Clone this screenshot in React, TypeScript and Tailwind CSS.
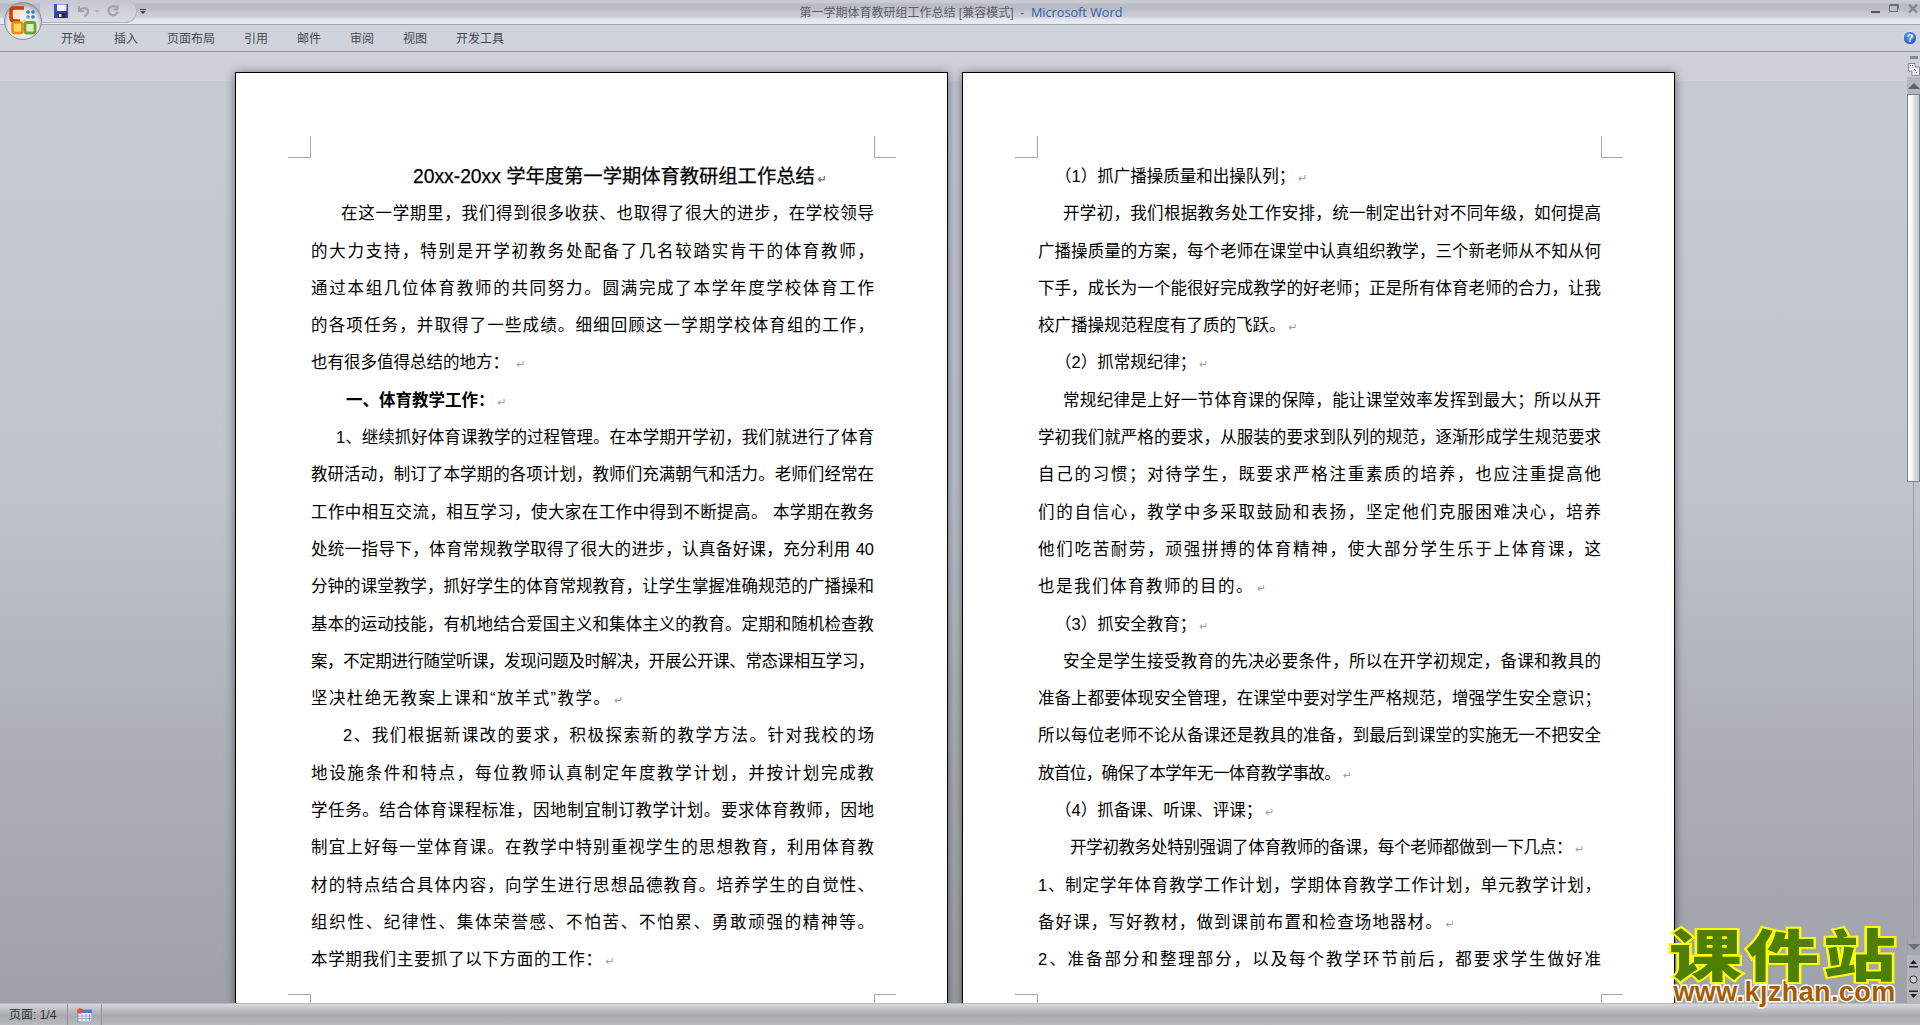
import React from 'react';

type L = { t: string; c?: string; end?: boolean };

const page1: L[] = [
  { t: '在这一学期里，我们得到很多收获、也取得了很大的进步，在学校领导', c: 'indent-[30px]' },
  { t: '的大力支持，特别是开学初教务处配备了几名较踏实肯干的体育教师，' },
  { t: '通过本组几位体育教师的共同努力。圆满完成了本学年度学校体育工作' },
  { t: '的各项任务，并取得了一些成绩。细细回顾这一学期学校体育组的工作，' },
  { t: '也有很多值得总结的地方： ', end: true },
  { t: '一、体育教学工作：', c: 'indent-[35px] font-bold', end: true },
  { t: '1、继续抓好体育课教学的过程管理。在本学期开学初，我们就进行了体育', c: 'indent-[25px]' },
  { t: '教研活动，制订了本学期的各项计划，教师们充满朝气和活力。老师们经常在' },
  { t: '工作中相互交流，相互学习，使大家在工作中得到不断提高。 本学期在教务' },
  { t: '处统一指导下，体育常规教学取得了很大的进步，认真备好课，充分利用 40' },
  { t: '分钟的课堂教学，抓好学生的体育常规教育，让学生掌握准确规范的广播操和' },
  { t: '基本的运动技能，有机地结合爱国主义和集体主义的教育。定期和随机检查教' },
  { t: '案，不定期进行随堂听课，发现问题及时解决，开展公开课、常态课相互学习，', c: 'tracking-[-0.5px]' },
  { t: '坚决杜绝无教案上课和“放羊式”教学。', c: 'tracking-[1.4px]', end: true },
  { t: '2、我们根据新课改的要求，积极探索新的教学方法。针对我校的场', c: 'indent-[32px]' },
  { t: '地设施条件和特点，每位教师认真制定年度教学计划，并按计划完成教' },
  { t: '学任务。结合体育课程标准，因地制宜制订教学计划。要求体育教师，因地' },
  { t: '制宜上好每一堂体育课。在教学中特别重视学生的思想教育，利用体育教' },
  { t: '材的特点结合具体内容，向学生进行思想品德教育。培养学生的自觉性、' },
  { t: '组织性、纪律性、集体荣誉感、不怕苦、不怕累、勇敢顽强的精神等。' },
  { t: '本学期我们主要抓了以下方面的工作：', c: 'tracking-[0.65px]', end: true },
];

const page2: L[] = [
  { t: '（1）抓广播操质量和出操队列；', c: 'indent-[17px]', end: true },
  { t: '开学初，我们根据教务处工作安排，统一制定出针对不同年级，如何提高', c: 'indent-[25px]' },
  { t: '广播操质量的方案，每个老师在课堂中认真组织教学，三个新老师从不知从何' },
  { t: '下手，成长为一个能很好完成教学的好老师；正是所有体育老师的合力，让我' },
  { t: '校广播操规范程度有了质的飞跃。', end: true },
  { t: '（2）抓常规纪律；', c: 'indent-[17px]', end: true },
  { t: '常规纪律是上好一节体育课的保障，能让课堂效率发挥到最大；所以从开', c: 'indent-[25px]' },
  { t: '学初我们就严格的要求，从服装的要求到队列的规范，逐渐形成学生规范要求' },
  { t: '自己的习惯；对待学生，既要求严格注重素质的培养，也应注重提高他' },
  { t: '们的自信心，教学中多采取鼓励和表扬，坚定他们克服困难决心，培养' },
  { t: '他们吃苦耐劳，顽强拼搏的体育精神，使大部分学生乐于上体育课，这' },
  { t: '也是我们体育教师的目的。', c: 'tracking-[1.5px]', end: true },
  { t: '（3）抓安全教育；', c: 'indent-[17px]', end: true },
  { t: '安全是学生接受教育的先决必要条件，所以在开学初规定，备课和教具的', c: 'indent-[25px]' },
  { t: '准备上都要体现安全管理，在课堂中要对学生严格规范，增强学生安全意识；' },
  { t: '所以每位老师不论从备课还是教具的准备，到最后到课堂的实施无一不把安全' },
  { t: '放首位，确保了本学年无一体育教学事故。', c: 'tracking-[-0.6px]', end: true },
  { t: '（4）抓备课、听课、评课；', c: 'indent-[17px]', end: true },
  { t: '开学初教务处特别强调了体育教师的备课，每个老师都做到一下几点：', c: 'indent-[32px] tracking-[-0.3px]', end: true },
  { t: '1、制定学年体育教学工作计划，学期体育教学工作计划，单元教学计划，' },
  { t: '备好课，写好教材，做到课前布置和检查场地器材。', c: 'tracking-[1.1px]', end: true },
  { t: '2、准备部分和整理部分，以及每个教学环节前后，都要求学生做好准' },
];

function Mark() {
  return <span className="ml-[3px] font-['DejaVu_Sans',sans-serif] text-[11px] font-normal tracking-normal text-[#a0a0a0]">↵</span>;
}

function Line({ l }: { l: L }) {
  return (
    <p className={`h-[37.3px] ${l.end ? 'text-left' : 'text-justify [text-align-last:justify]'} ${l.c ?? ''}`}>
      {l.t}
      {l.end ? <Mark /> : null}
    </p>
  );
}

function CropMarks() {
  return (
    <>
      <div className="absolute left-[52px] top-[63px] h-[22px] w-[23px] border-b border-r border-[#a8a8a8]" />
      <div className="absolute left-[638px] top-[63px] h-[22px] w-[22px] border-b border-l border-[#a8a8a8]" />
      <div className="absolute left-[52px] top-[921px] h-[22px] w-[23px] border-r border-t border-[#a8a8a8]" />
      <div className="absolute left-[638px] top-[921px] h-[22px] w-[22px] border-l border-t border-[#a8a8a8]" />
    </>
  );
}

function Page({ children }: { children: React.ReactNode }) {
  return (
    <div className="relative h-[960px] w-[713px] shrink-0 border border-black bg-white pl-[75px] pr-[73px] pt-[85px] text-[16.5px] leading-[37.3px] text-black shadow-[0_1px_9px_rgba(0,0,0,0.5)]">
      <CropMarks />
      {children}
    </div>
  );
}

function OfficeButton() {
  return (
    <svg className="absolute left-[4px] top-[2px] h-[38px] w-[38px]" viewBox="0 0 38 38">
      <defs>
        <radialGradient id="orb" cx="50%" cy="60%" r="55%">
          <stop offset="0" stopColor="#ffffff" />
          <stop offset="0.75" stopColor="#e4e4e4" />
          <stop offset="1" stopColor="#a9aab0" />
        </radialGradient>
      </defs>
      <circle cx="19" cy="19" r="18.5" fill="url(#orb)" stroke="#8d8f96" strokeWidth="1" />
      <path d="M20 6 H10 Q7 6 7 9 V16 Q7 19 10 19 H16" fill="none" stroke="#cc3a05" strokeWidth="3.4" />
      <rect x="9.5" y="8.5" width="7" height="8" fill="#f9e8c8" />
      <rect x="8.5" y="20.5" width="10" height="10.5" rx="2" fill="#fdd85a" stroke="#ed8c12" strokeWidth="2.6" />
      <rect x="21" y="20.5" width="10" height="10.5" rx="2" fill="#e2f1c4" stroke="#68a52e" strokeWidth="2.8" />
      <circle cx="24" cy="10" r="1.8" fill="#2c7ac9" />
      <circle cx="29" cy="10" r="1.8" fill="#2c7ac9" />
      <circle cx="24" cy="15" r="1.8" fill="#5a9ae0" />
      <circle cx="29" cy="15" r="1.8" fill="#2c7ac9" />
      <circle cx="20" cy="18.5" r="1.2" fill="#f2b64a" />
    </svg>
  );
}

function Save() {
  return (
    <svg width="14" height="14" viewBox="0 0 14 14">
      <defs>
        <linearGradient id="fl" x1="0" y1="0" x2="1" y2="1">
          <stop offset="0" stopColor="#4057c8" />
          <stop offset="1" stopColor="#2a2f88" />
        </linearGradient>
      </defs>
      <rect width="14" height="14" fill="url(#fl)" />
      <rect x="3" y="0.5" width="9.5" height="6.5" fill="#f3f3f6" />
      <rect x="4" y="9" width="7" height="5" fill="#2c2c38" />
      <rect x="5" y="10" width="2.4" height="3" fill="#e8e8e8" />
    </svg>
  );
}

function Undo() {
  return (
    <svg width="13" height="12" viewBox="0 0 13 12" fill="none">
      <path d="M2 1 V6 H7" stroke="#9fa2ab" strokeWidth="2" />
      <path d="M2.5 5.5 C5 2 11 2 11 6.5 C11 8.5 9.5 10 7.5 11" stroke="#9fa2ab" strokeWidth="2.2" />
    </svg>
  );
}

function Redo() {
  return (
    <svg width="12" height="12" viewBox="0 0 12 12" fill="none">
      <path d="M9.5 2.5 A4.6 4.6 0 1 0 10.6 7" stroke="#9fa2ab" strokeWidth="2.2" />
      <path d="M10.5 0 V4.5 H6.5" stroke="#9fa2ab" strokeWidth="1.8" />
    </svg>
  );
}

function Help() {
  return (
    <svg width="14" height="14" viewBox="0 0 14 14">
      <defs>
        <radialGradient id="hp" cx="45%" cy="35%" r="70%">
          <stop offset="0" stopColor="#6aa6ee" />
          <stop offset="1" stopColor="#1a4fb4" />
        </radialGradient>
      </defs>
      <circle cx="7" cy="7" r="6.6" fill="url(#hp)" stroke="#dfe8f6" strokeWidth="0.8" />
      <text x="7" y="10.8" textAnchor="middle" fontSize="11" fontWeight="700" fontFamily="Liberation Sans" fill="#fff">?</text>
    </svg>
  );
}

function StatusIcon() {
  return (
    <svg width="15" height="14" viewBox="0 0 15 14">
      <rect x="1" y="2" width="14" height="12" fill="#eef2f8" stroke="#6d8fb8" />
      <rect x="1" y="2" width="14" height="3" fill="#4a7fc4" />
      <path d="M5 6 V13 M9 6 V13 M12.5 6 V13 M2 8 H14 M2 10.5 H14" stroke="#8a9fbc" strokeWidth="0.8" />
      <circle cx="3" cy="3" r="2.8" fill="#e2542a" />
    </svg>
  );
}

function RulerToggle() {
  return (
    <svg width="12" height="13" viewBox="0 0 12 13">
      <path d="M0.5 0.5 H7 V4 H11.5 V12.5 H4 V8 H0.5 Z" fill="#f1eef4" stroke="#6f7280" strokeWidth="0.8" />
      <path d="M2 2 L3 3 M4 2 L5 3 M6 6 L8 8 M8 10 L9 9" stroke="#555" strokeWidth="0.8" />
    </svg>
  );
}

function Tri({ up }: { up?: boolean }) {
  return (
    <div className={up
      ? 'h-0 w-0 border-x-[6px] border-b-[6px] border-x-transparent border-b-[#5e6269]'
      : 'h-0 w-0 border-x-[6px] border-t-[6px] border-x-transparent border-t-[#6b6f76]'} />
  );
}

function Scrollbar() {
  return (
    <div className="flex w-[13px] shrink-0 flex-col items-center">
      <div className="mt-[4px] h-[3px] w-[8px] shrink-0 bg-[#83868e]" />
      <div className="mt-[4px] h-[13px] shrink-0"><RulerToggle /></div>
      <div className="mt-[1px] flex h-[17px] w-full shrink-0 items-center justify-center bg-[#b4b7bf]"><Tri up /></div>
      <div className="h-[388px] w-full shrink-0 border border-[#7f828a] bg-[linear-gradient(to_right,#ffffff,#fdf8e6_35%,#dcdce6_60%,#c3c5d2)]" />
      <div className="flex-1 border-l border-[#9a9da5] bg-[#aeb1b9]" />
      <div className="flex h-[17px] w-full shrink-0 items-center justify-center border-l border-[#9a9da5] bg-[#a4a7ad]"><Tri /></div>
      <div className="flex h-[48px] w-full shrink-0 flex-col items-center justify-evenly bg-[#b3b6bb] text-[#222]">
        <svg width="9" height="9" viewBox="0 0 9 9"><path d="M4.5 0 L8 4 H1 Z M0 6 H9 V7.6 H0 Z" fill="#222" /></svg>
        <svg width="9" height="9" viewBox="0 0 9 9"><circle cx="4.5" cy="4.5" r="3.6" fill="#c9ccd2" stroke="#333" /></svg>
        <svg width="9" height="9" viewBox="0 0 9 9"><path d="M0 1.4 H9 V3 H0 Z M1 5 H8 L4.5 9 Z" fill="#222" /></svg>
      </div>
    </div>
  );
}

export default function App() {
  const tabs = ['开始', '插入', '页面布局', '引用', '邮件', '审阅', '视图', '开发工具'];
  return (
    <div lang="zh-CN" className="relative flex h-[1025px] w-[1920px] flex-col overflow-hidden font-['Liberation_Sans','Noto_Sans_CJK_SC',sans-serif]">
      {/* title bar */}
      <div className="grid h-[25px] shrink-0 grid-cols-[1fr_auto_1fr] border-b border-[#a4a6ae] bg-[linear-gradient(to_bottom,#c9ccd3_0,#c6c9d0_3px,#b9bcc6_4px,#b9bcc6_9px,#c6c9d1_13px,#cdd0d8_17px,#e3e6ef_19px,#e8ebf3_24px)]">
        <div className="flex items-start pl-[40px]">
          <div className="flex h-[23px] w-[97px] items-center rounded-r-[14px] border-b border-r border-[#b0b3bb] bg-[linear-gradient(to_bottom,#c4c7cf,#d8dbe2)] pl-[14px]">
            <Save />
            <div className="ml-[9px]"><Undo /></div>
            <div className="ml-[4px] h-0 w-0 border-x-[3px] border-t-[3px] border-x-transparent border-t-[#b0b3bb]" />
            <div className="ml-[7px]"><Redo /></div>
          </div>
          <div className="ml-[2px] mt-[9px] flex w-[8px] flex-col items-center gap-[1px]">
            <div className="h-[1px] w-[6px] bg-[#444]" />
            <div className="h-0 w-0 border-x-[3px] border-t-[3px] border-x-transparent border-t-[#444]" />
          </div>
        </div>
        <div className="whitespace-pre pl-[2px] pt-[3px] text-[12px] leading-[18px] text-[#5c5f66]">
          第一学期体育教研组工作总结 [兼容模式]  -  <span className="font-['Open_Sans',sans-serif] text-[12.7px] text-[#2e62a6]">Microsoft Word</span>
        </div>
        <div className="flex items-start justify-end gap-[9px] pr-[2px] pt-[4px]">
          <div className="mt-[7px] h-[2px] w-[9px] bg-[#555960]" />
          <svg width="10" height="8" viewBox="0 0 10 8" fill="none"><rect x="0.5" y="1.5" width="8" height="6" stroke="#6a6e76" /><path d="M1 0.5 H9.5 V5" stroke="#6a6e76" /></svg>
          <svg width="10" height="9" viewBox="0 0 10 9" fill="none"><path d="M1 0.5 L9 8.5 M9 0.5 L1 8.5" stroke="#7f838b" strokeWidth="2.2" /></svg>
        </div>
      </div>

      {/* ribbon tabs */}
      <div className="flex h-[27px] shrink-0 items-center justify-between border-b border-[#95979d] bg-[#cfd3dc] pl-[61px] pr-[3px]">
        <div className="flex gap-[29px] pt-[1px] text-[12px] text-[#45484e]">
          {tabs.map(t => <span key={t}>{t}</span>)}
        </div>
        <Help />
      </div>

      {/* document area */}
      <div className="flex min-h-0 flex-1 overflow-hidden bg-[linear-gradient(to_bottom,#d0ced8_0,#d0ced8_29px,#c6cad3_29px,#c0c4cd_45%,#adb0b7_72%,#9fa2a8_100%)]">
        <div className="flex flex-1 gap-[14px] pl-[235px] pt-[20px]">
          <Page>
            <p className="h-[37.3px] pl-[102px] text-[19.3px] [-webkit-text-stroke:0.25px_#000]">
              20xx-20xx 学年度第一学期体育教研组工作总结<Mark />
            </p>
            {page1.map((l, i) => <Line key={i} l={l} />)}
          </Page>
          <Page>
            {page2.map((l, i) => <Line key={i} l={l} />)}
          </Page>
        </div>
        <Scrollbar />
      </div>

      {/* status bar */}
      <div className="flex h-[22px] shrink-0 items-stretch border-t border-[#b8b9bc] bg-[linear-gradient(to_bottom,#d6d8dc,#bfc1c6_25%,#a9abb1_55%,#b8bac0_100%)] text-[12px] text-[#333]">
        <div className="flex w-[68px] items-center border-r border-[#8e9096] pl-[9px]">页面: 1/4</div>
        <div className="flex w-[34px] items-center justify-center border-r border-[#8e9096]"><StatusIcon /></div>
      </div>

      {/* overlays */}
      <OfficeButton />
      <div className="absolute left-[1669px] top-[926px] flex w-[231px] flex-col items-center">
        <div className="h-[52px] origin-center scale-y-[0.76] whitespace-nowrap font-['Noto_Sans_CJK_SC',sans-serif] text-[73px] font-black leading-[52px] tracking-[4px] text-[#4f7f00] [-webkit-text-stroke:5px_#ffff00] [paint-order:stroke_fill]">课件站</div>
        <div className="mt-[2px] whitespace-nowrap font-['Liberation_Sans',sans-serif] text-[27px] font-bold leading-[24px] tracking-[0.4px] text-[#a85a00] [-webkit-text-stroke:3px_#ffffff] [paint-order:stroke_fill]">www.kjzhan.com</div>
      </div>
    </div>
  );
}
